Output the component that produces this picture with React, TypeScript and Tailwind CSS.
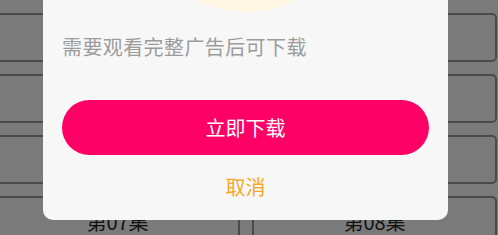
import React from "react";

const episodes = ["第01集", "第02集", "第03集", "第04集", "第05集", "第06集", "第07集", "第08集"];

function EpisodeGrid() {
  return (
    <div className="ml-[-5px] w-[502px] pt-[13px] grid grid-cols-2 gap-x-[12px] gap-y-[12px]">
      {episodes.map((ep) => (
        <div
          key={ep}
          className="h-[49px] rounded-[5px] border-2 border-[#4a4a4a] bg-[#7a7a7a] flex items-center justify-center pt-[3px] text-[20px] text-[#111]"
        >
          {ep}
        </div>
      ))}
    </div>
  );
}

function AdModal() {
  return (
    <div className="absolute left-[43px] top-0 w-[405px] overflow-hidden rounded-b-[10px] bg-[#f7f7f7]">
      <div className="absolute left-1/2 top-[-216px] -translate-x-1/2 w-[228px] h-[228px] rounded-full bg-[#fff6e3]" />
      <div className="relative flex flex-col px-[19px] pt-[33px] pb-[19px]">
        <p className="text-[20px] leading-[28px] text-[#9b9b9b] tracking-[0.4px]">需要观看完整广告后可下载</p>
        <button className="mt-[39px] h-[55px] w-full rounded-full bg-[#ff0066] text-[20px] text-white">
          立即下载
        </button>
        <button className="mt-[18px] h-[28px] text-[20px] leading-[28px] text-[#f8a626]">取消</button>
      </div>
    </div>
  );
}

export default function App() {
  return (
    <div
      className="relative w-[498px] h-[235px] overflow-hidden bg-[#7a7a7a]"
      style={{ fontFamily: '"Noto Sans CJK SC", "Noto Sans", sans-serif' }}
    >
      <EpisodeGrid />
      <AdModal />
    </div>
  );
}
